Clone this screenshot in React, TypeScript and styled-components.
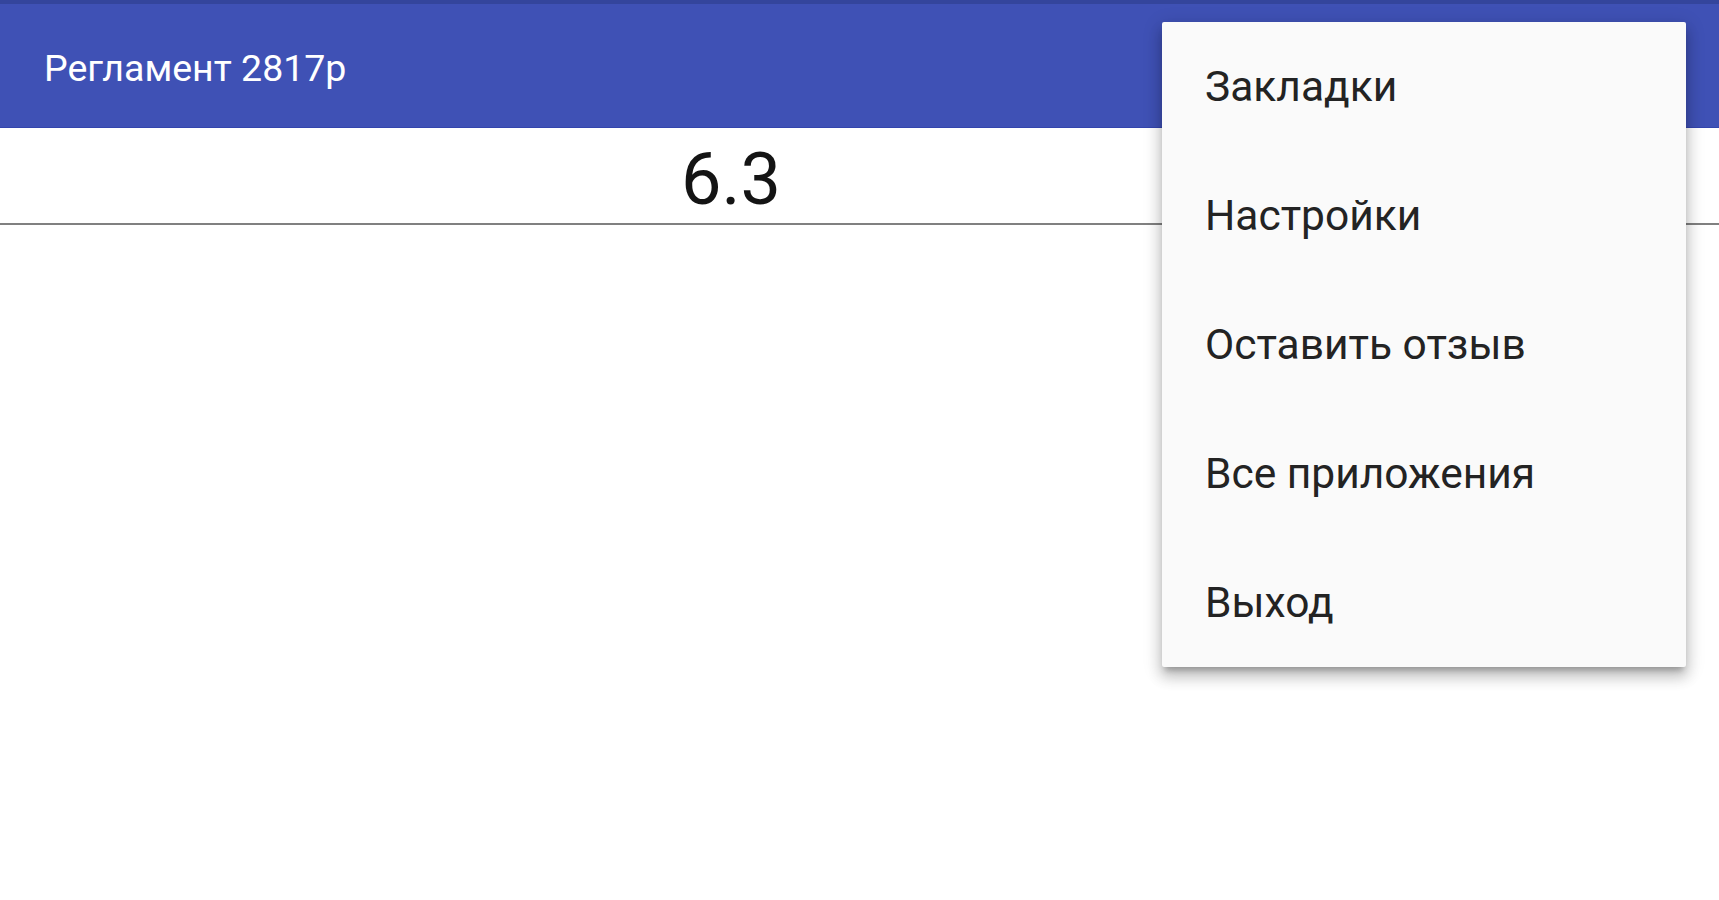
import styled, { createGlobalStyle } from "styled-components";

const GlobalStyle = createGlobalStyle`
  html, body {
    margin: 0;
    padding: 0;
    background: #ffffff;
    font-family: Roboto, "Noto Sans", sans-serif;
  }
  #root {
    min-height: 100vh;
  }
`;

const Screen = styled.div`
  position: relative;
  width: 100%;
  min-height: 900px;
  background: #ffffff;
  overflow: hidden;
`;

const StatusStrip = styled.div`
  height: 4px;
  background: #34459c;
`;

const Toolbar = styled.header`
  height: 124px;
  display: flex;
  align-items: center;
  padding: 4px 0 0 44px;
  background: #3f51b5;
  border-bottom: 1px solid #3345ad;
  box-sizing: border-box;
`;

const Title = styled.h1`
  margin: 0;
  font-size: 37.5px;
  font-weight: 400;
  color: #ffffff;
`;

const ValueRow = styled.div`
  display: grid;
  grid-template-columns: 1462px 1fr;
  height: 97px;
  border-bottom: 2px solid #808080;
  box-sizing: border-box;
`;

const ValueCell = styled.div`
  display: flex;
  align-items: center;
  justify-content: center;
  font-size: 72px;
  color: #141414;
  padding-top: 8px;
`;

const Menu = styled.ul`
  position: absolute;
  top: 22px;
  left: 1162px;
  width: 524px;
  margin: 0;
  padding: 0;
  list-style: none;
  background: #fafafa;
  border-radius: 2px;
  box-shadow: 0 6px 6px -3px rgba(0, 0, 0, 0.25),
    0 10px 14px 1px rgba(0, 0, 0, 0.16), 0 4px 18px 3px rgba(0, 0, 0, 0.12);
`;

const MenuItem = styled.li`
  height: 129px;
  display: flex;
  align-items: center;
  padding-left: 43px;
  font-size: 42.5px;
  color: #232323;
`;

const items = ["Закладки", "Настройки", "Оставить отзыв", "Все приложения", "Выход"];

export default function App() {
  return (
    <Screen>
      <GlobalStyle />
      <StatusStrip />
      <Toolbar>
        <Title>Регламент 2817р</Title>
      </Toolbar>
      <ValueRow>
        <ValueCell>6.3</ValueCell>
        <div />
      </ValueRow>
      <Menu>
        {items.map((item) => (
          <MenuItem key={item}>{item}</MenuItem>
        ))}
      </Menu>
    </Screen>
  );
}
